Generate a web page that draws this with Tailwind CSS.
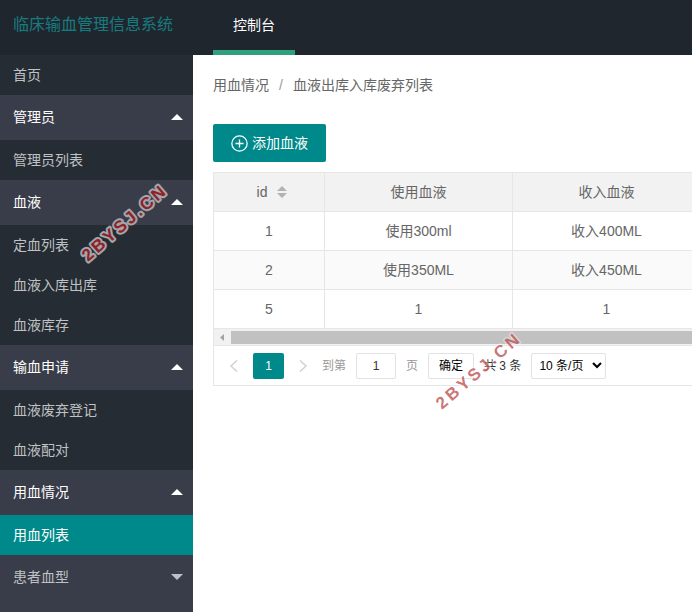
<!DOCTYPE html>
<html lang="zh-CN">
<head>
    <meta charset="UTF-8">
    <meta name="viewport" content="width=device-width, initial-scale=1.0">
    <title>临床输血管理信息系统</title>
    <!-- Tailwind CSS CDN -->
    <script src="https://cdn.jsdelivr.net/npm/@tailwindcss/browser@4"></script>
    <style>
        body {
            font-family: 'Liberation Sans', 'Noto Sans CJK SC', sans-serif;
        }
    </style>
</head>
<body class="relative flex flex-col min-h-screen overflow-hidden bg-white text-sm text-[#666]">
    <!-- Header -->
    <header class="flex h-[55px] bg-[#20262e]">
        <a href="#" class="w-[193px] shrink-0 pl-[13px] text-base leading-[50px] text-[#177c80]">临床输血管理信息系统</a>
        <nav class="pl-5">
            <a href="#" class="block h-full px-5 leading-[50px] text-white border-b-5 border-[#2f9f7c]">控制台</a>
        </nav>
    </header>

    <div class="flex grow">
        <!-- Sidebar menu -->
        <aside class="w-[193px] shrink-0 bg-[#393d49] text-[#bfc1c4]">
            <nav>
                <a href="#" class="block bg-[#262c33] pl-[13px] leading-10">首页</a>

                <button type="button" class="flex w-full h-[45px] items-center justify-between pb-px pl-[13px] pr-[10px] text-white">
                    管理员
                    <svg class="w-3 h-[6px]" viewBox="0 0 12 6" fill="currentColor"><path d="M0 6L6 0L12 6z"/></svg>
                </button>
                <div class="bg-[#262c33]">
                    <a href="#" class="block pl-[13px] leading-10">管理员列表</a>
                </div>

                <button type="button" class="flex w-full h-[45px] items-center justify-between pb-px pl-[13px] pr-[10px] text-white">
                    血液
                    <svg class="w-3 h-[6px]" viewBox="0 0 12 6" fill="currentColor"><path d="M0 6L6 0L12 6z"/></svg>
                </button>
                <div class="bg-[#262c33]">
                    <a href="#" class="block pl-[13px] leading-10">定血列表</a>
                    <a href="#" class="block pl-[13px] leading-10">血液入库出库</a>
                    <a href="#" class="block pl-[13px] leading-10">血液库存</a>
                </div>

                <button type="button" class="flex w-full h-[45px] items-center justify-between pb-px pl-[13px] pr-[10px] text-white">
                    输血申请
                    <svg class="w-3 h-[6px]" viewBox="0 0 12 6" fill="currentColor"><path d="M0 6L6 0L12 6z"/></svg>
                </button>
                <div class="bg-[#262c33]">
                    <a href="#" class="block pl-[13px] leading-10">血液废弃登记</a>
                    <a href="#" class="block pl-[13px] leading-10">血液配对</a>
                </div>

                <button type="button" class="flex w-full h-[45px] items-center justify-between pb-px pl-[13px] pr-[10px] text-white">
                    用血情况
                    <svg class="w-3 h-[6px]" viewBox="0 0 12 6" fill="currentColor"><path d="M0 6L6 0L12 6z"/></svg>
                </button>
                <a href="#" class="block bg-[#00898b] pl-[13px] leading-10 text-white">用血列表</a>

                <button type="button" class="flex w-full h-[45px] items-center justify-between pb-px pl-[13px] pr-[10px]">
                    患者血型
                    <svg class="w-3 h-[6px]" viewBox="0 0 12 6" fill="currentColor"><path d="M0 0L6 6L12 0z"/></svg>
                </button>
            </nav>
        </aside>

        <!-- Content -->
        <main class="grow min-w-0 overflow-hidden pl-5 pt-5">
            <div class="flex gap-[10px] leading-5">
                <a href="#">用血情况</a>
                <span class="text-[#999]">/</span>
                <span>血液出库入库废弃列表</span>
            </div>

            <button type="button" class="mt-[29px] flex h-[38px] items-center gap-1 rounded-xs bg-[#00898b] px-[18px] text-white">
                <svg class="w-[17px] h-[17px]" viewBox="0 0 16 16" fill="none" stroke="currentColor" stroke-width="1.2"><circle cx="8" cy="8" r="7.2"/><path d="M8 4.2v7.6M4.2 8h7.6"/></svg>
                添加血液
            </button>

            <div class="mt-[10px] min-w-[864px] border border-[#e6e6e6]">
                <table class="w-full table-fixed border-separate border-spacing-0 text-center">
                    <colgroup>
                        <col class="w-[111px]">
                        <col class="w-[188px]">
                        <col class="w-[188px]">
                        <col>
                    </colgroup>
                    <thead>
                        <tr class="h-[39px] bg-[#f2f2f2]">
                            <th class="border-r border-b border-[#e6e6e6] font-normal">
                                <span class="flex items-center justify-center gap-[10px] pl-[6px]">
                                    id
                                    <svg class="w-[10px] h-3" viewBox="0 0 10 12" fill="#b2b2b2"><path d="M0 5L5 0L10 5zM0 7L5 12L10 7z"/></svg>
                                </span>
                            </th>
                            <th class="border-r border-b border-[#e6e6e6] font-normal">使用血液</th>
                            <th class="border-r border-b border-[#e6e6e6] font-normal">收入血液</th>
                            <td class="border-b border-[#e6e6e6]"></td>
                        </tr>
                    </thead>
                    <tbody>
                        <tr class="h-[39px]">
                            <td class="border-r border-b border-[#e6e6e6]">1</td>
                            <td class="border-r border-b border-[#e6e6e6]">使用300ml</td>
                            <td class="border-r border-b border-[#e6e6e6]">收入400ML</td>
                            <td class="border-b border-[#e6e6e6]"></td>
                        </tr>
                        <tr class="h-[39px] bg-[#fafafa]">
                            <td class="border-r border-b border-[#e6e6e6]">2</td>
                            <td class="border-r border-b border-[#e6e6e6]">使用350ML</td>
                            <td class="border-r border-b border-[#e6e6e6]">收入450ML</td>
                            <td class="border-b border-[#e6e6e6]"></td>
                        </tr>
                        <tr class="h-[39px]">
                            <td class="border-r border-b border-[#e6e6e6]">5</td>
                            <td class="border-r border-b border-[#e6e6e6]">1</td>
                            <td class="border-r border-b border-[#e6e6e6]">1</td>
                            <td class="border-b border-[#e6e6e6]"></td>
                        </tr>
                    </tbody>
                </table>

                <!-- Horizontal scroll bar -->
                <div class="flex h-4 items-center bg-[#f1f1f1]">
                    <svg class="w-[17px] h-[7px]" viewBox="0 0 17 7" fill="#a3a3a3"><path d="M10 0v7L6 3.5z"/></svg>
                    <div class="h-[13px] grow bg-[#c1c1c1]"></div>
                </div>

                <!-- Pager -->
                <div class="flex h-10 items-center border-t border-[#e6e6e6] pl-[15px] text-xs text-[#999]">
                    <button type="button" aria-label="上一页" class="text-[#d2d2d2]">
                        <svg class="w-[10px] h-3" viewBox="0 0 10 12" fill="none" stroke="currentColor" stroke-width="1.5"><path d="M8 0.5L2 6L8 11.5"/></svg>
                    </button>
                    <button type="button" class="ml-[14px] h-[26px] w-[31px] rounded-xs bg-[#00898b] text-white">1</button>
                    <button type="button" aria-label="下一页" class="ml-[14px] text-[#d2d2d2]">
                        <svg class="w-[10px] h-3" viewBox="0 0 10 12" fill="none" stroke="currentColor" stroke-width="1.5"><path d="M2 0.5L8 6L2 11.5"/></svg>
                    </button>
                    <label for="pageNo" class="ml-[14px]">到第</label>
                    <input type="text" id="pageNo" value="1" class="mx-[10px] h-[26px] w-10 rounded-xs border border-[#e2e2e2] text-center text-[#333]">
                    <span>页</span>
                    <button type="button" class="ml-[10px] h-[26px] w-[46px] rounded-xs border border-[#e2e2e2] text-black">确定</button>
                    <span class="ml-[10px] text-[#333]">共 3 条</span>
                    <div class="relative ml-[10px]">
                        <select aria-label="每页条数" class="block h-[26px] w-[75px] appearance-none rounded-xs border border-[#e2e2e2] pl-[7px] text-black">
                            <option>10 条/页</option>
                            <option>20 条/页</option>
                            <option>30 条/页</option>
                        </select>
                        <div class="pointer-events-none absolute inset-y-0 right-1 flex items-center text-black">
                            <svg class="w-[10px] h-[7px]" viewBox="0 0 10 7" fill="none" stroke="currentColor" stroke-width="2"><path d="M1 1L5 5L9 1"/></svg>
                        </div>
                    </div>
                </div>
            </div>
        </main>
    </div>

    <!-- Watermarks -->
    <svg class="pointer-events-none absolute left-[70px] top-[170px] w-[120px] h-[110px]" viewBox="0 0 120 110">
        <text transform="translate(18 92) rotate(-41)" class="text-[17px] font-bold tracking-[3px] fill-[#8f2128] stroke-[#a5a5ab] stroke-4 [paint-order:stroke] [stroke-linejoin:round]">2BYSJ.CN</text>
    </svg>
    <svg class="pointer-events-none absolute left-[424px] top-[318px] w-[120px] h-[110px]" viewBox="0 0 120 110">
        <text transform="translate(18 92) rotate(-41)" class="text-[17px] font-bold tracking-[3px] fill-[#b94a4a]/75 stroke-white/40 stroke-3 [paint-order:stroke] [stroke-linejoin:round]">2BYSJ.CN</text>
    </svg>
</body>
</html>
